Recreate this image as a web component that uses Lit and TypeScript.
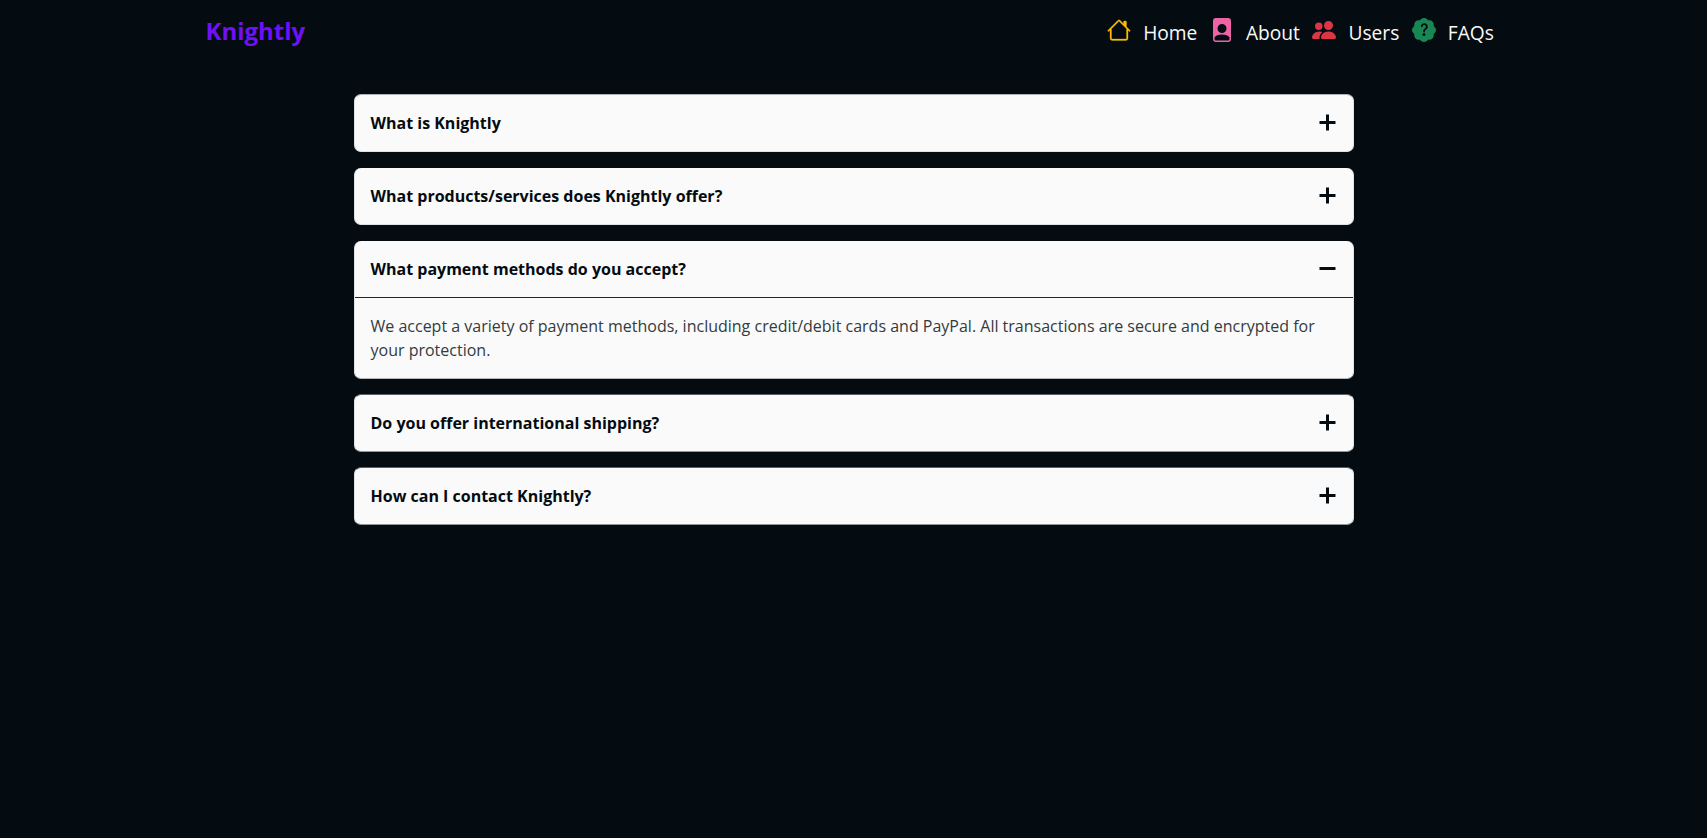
import { LitElement, html, svg, css } from "lit";
import { customElement, state } from "lit/decorators.js";

const ICONS = {
  house: "M8.707 1.5a1 1 0 0 0-1.414 0L.646 8.146a.5.5 0 0 0 .708.708L2 8.207V13.5A1.5 1.5 0 0 0 3.5 15h9a1.5 1.5 0 0 0 1.5-1.5V8.207l.646.647a.5.5 0 0 0 .708-.708L13 5.793V2.5a.5.5 0 0 0-.5-.5h-1a.5.5 0 0 0-.5.5v1.293zM13 7.207V13.5a.5.5 0 0 1-.5.5h-9a.5.5 0 0 1-.5-.5V7.207l5-5z",
  person: "M12 0H4a2 2 0 0 0-2 2v12a2 2 0 0 0 2 2h8a2 2 0 0 0 2-2V2a2 2 0 0 0-2-2m-1 7a3 3 0 1 1-6 0 3 3 0 0 1 6 0m-3 4c2.623 0 4.146.826 5 1.755V14a1 1 0 0 1-1 1H4a1 1 0 0 1-1-1v-1.245C3.854 11.825 5.377 11 8 11",
  people: "M7 14s-1 0-1-1 1-4 5-4 5 3 5 4-1 1-1 1zm4-6a3 3 0 1 0 0-6 3 3 0 0 0 0 6m-5.784 6A2.24 2.24 0 0 1 5 13c0-1.355.68-2.75 1.936-3.72A6.3 6.3 0 0 0 5 9c-4 0-5 3-5 4s1 1 1 1zM4.5 8a2.5 2.5 0 1 0 0-5 2.5 2.5 0 0 0 0 5",
  question: "M5.933.87a2.89 2.89 0 0 1 4.134 0l.622.638.89-.011a2.89 2.89 0 0 1 2.924 2.924l-.01.89.636.622a2.89 2.89 0 0 1 0 4.134l-.637.622.011.89a2.89 2.89 0 0 1-2.924 2.924l-.89-.01-.622.636a2.89 2.89 0 0 1-4.134 0l-.622-.637-.89.011a2.89 2.89 0 0 1-2.924-2.924l.01-.89-.636-.622a2.89 2.89 0 0 1 0-4.134l.637-.622-.011-.89a2.89 2.89 0 0 1 2.924-2.924l.89.01zM7.002 11a1 1 0 1 0 2 0 1 1 0 0 0-2 0m1.602-2.027c.04-.534.198-.815.846-1.26.674-.475 1.05-1.09 1.05-1.986 0-1.325-.92-2.227-2.262-2.227-1.02 0-1.792.492-2.1 1.29A1.7 1.7 0 0 0 6 5.48c0 .393.203.64.545.64.272 0 .455-.147.564-.51.158-.592.525-.915 1.074-.915.61 0 1.03.446 1.03 1.084 0 .563-.208.885-.822 1.325-.619.433-.926.914-.926 1.64v.111c0 .428.208.745.585.745.336 0 .504-.24.554-.627",
};

const NAV = [
  { label: "Home", icon: ICONS.house, tone: "amber" },
  { label: "About", icon: ICONS.person, tone: "pink" },
  { label: "Users", icon: ICONS.people, tone: "red" },
  { label: "FAQs", icon: ICONS.question, tone: "green" },
];

const FAQS = [
  { q: "What is Knightly", a: "" },
  { q: "What products/services does Knightly offer?", a: "" },
  {
    q: "What payment methods do you accept?",
    a: "We accept a variety of payment methods, including credit/debit cards and PayPal. All transactions are secure and encrypted for your protection.",
  },
  { q: "Do you offer international shipping?", a: "" },
  { q: "How can I contact Knightly?", a: "" },
];

@customElement("app-root")
export class AppRoot extends LitElement {
  @state() private open = 2;

  static styles = css`
    :host {
      display: block;
      box-sizing: border-box;
      min-height: 100vh;
      background: #040c11;
      font: 400 16px/24px "Open Sans", sans-serif;
      color: #fafafa;
    }
    *, *::before, *::after { box-sizing: border-box; }
    .bar {
      display: flex;
      align-items: center;
      justify-content: space-between;
      max-width: 1320px;
      height: 62px;
      margin: 0 auto;
      padding: 0 12px;
    }
    .brand {
      color: #6f10f7;
      font-size: 24px;
      font-weight: 700;
      line-height: 36px;
      text-decoration: none;
    }
    .nav { display: flex; padding-top: 3px; }
    .link {
      display: flex;
      align-items: center;
      gap: 12px;
      height: 29px;
      padding: 0 7.6px 0 4.9px;
      color: #fafafa;
      font-size: 19.2px;
      line-height: 29px;
      text-decoration: none;
    }
    .icon { display: block; width: 24px; height: 24px; margin-bottom: 5px; fill: currentColor; overflow: visible; }
    .amber { color: #ffb907; stroke: currentColor; stroke-width: 0.2; }
    .pink { color: #ed64a6; }
    .red { color: #dc3545; }
    .green { color: #198754; }
    .faqs {
      display: flex;
      flex-direction: column;
      gap: 16px;
      max-width: 1000px;
      margin: 32px auto 0;
    }
    .item {
      overflow: hidden;
      border: 1px solid #dee2e6;
      border-top: 0;
      border-radius: 7px;
      background: #fafafa;
      color: #040c11;
    }
    .item:first-child { border-top: 1px solid #adb1b5; }
    .item:nth-child(3) { border-bottom-color: #b4b8bb; }
    .item:nth-child(n + 4) {
      margin-top: -1px;
      border-top: 1px solid #5b6064;
      border-bottom-color: #92979b;
    }
    .question {
      display: flex;
      align-items: center;
      justify-content: space-between;
      width: 100%;
      padding: 16px;
      border: 0;
      background: none;
      color: inherit;
      font: inherit;
      font-weight: 700;
      text-align: left;
    }
    .sign { display: block; width: 17px; height: 17px; margin: -1px 0.5px 0 0; fill: currentColor; }
    .answer {
      padding: 16px;
      border-top: 1px solid #212529;
      color: #343a40;
    }
  `;

  private sign(minus: boolean) {
    return html`<svg class="sign" viewBox="0 0 17 17">
      ${minus
        ? svg`<rect x="0.5" y="7" width="16" height="3" />`
        : svg`<path d="M7 0.5h3v6.5h6.5v3H10v6.5H7V10H0.5V7H7z" />`}
    </svg>`;
  }

  render() {
    return html`
      <header class="bar">
        <a class="brand">Knightly</a>
        <nav class="nav">
          ${NAV.map(
            (n) => html`<a class="link"
              ><svg class="icon ${n.tone}" viewBox="0 0 16 16"><path fill-rule="evenodd" d=${n.icon} /></svg
              ><span>${n.label}</span></a
            >`
          )}
        </nav>
      </header>
      <main class="faqs">
        ${FAQS.map(
          (f, i) => html`<section class="item">
            <button class="question" @click=${() => (this.open = this.open === i ? -1 : i)}>
              <span>${f.q}</span>${this.sign(this.open === i)}
            </button>
            ${this.open === i && f.a ? html`<div class="answer">${f.a}</div>` : ""}
          </section>`
        )}
      </main>
    `;
  }
}
